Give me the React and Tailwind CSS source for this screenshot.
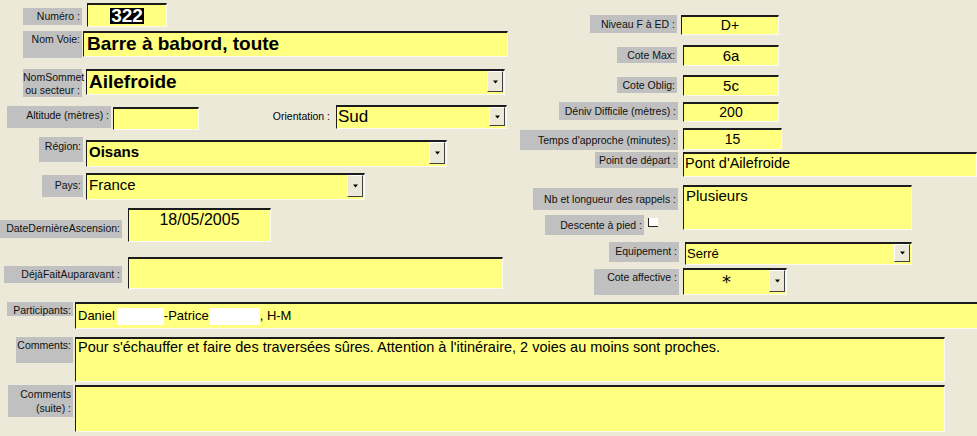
import React from 'react';

const Label = ({ children, className = '' }) => (
  <div className={`bg-[#c0c0c0] text-right text-[10.5px] leading-[13px] text-[#111] pr-[2px] pt-[2px] shrink-0 whitespace-nowrap ${className}`}>
    {children}
  </div>
);

const Field = ({ children, className = '' }) => (
  <div className={`bg-[#ffff80] border border-t-2 border-t-[#1c1c1c] border-l-[#1c1c1c] border-r-[#fbfbf4] border-b-[#fbfbf4] shrink-0 overflow-hidden whitespace-nowrap ${className}`}>
    {children}
  </div>
);

const Arrow = () => (
  <div className="w-[16px] self-stretch mb-[2px] mr-[1px] bg-[#ece9d8] border border-t-white border-l-white border-r-[#404040] border-b-[#404040] flex items-center justify-center shrink-0">
    <svg width="7" height="4" viewBox="0 0 7 4">
      <path d="M1 0.5h5L3.5 3.5z" fill="#000" />
    </svg>
  </div>
);

const Combo = ({ children, className = '', textClass = '' }) => (
  <Field className={`flex ${className}`}>
    <div className={`flex-1 overflow-hidden ${textClass}`}>{children}</div>
    <Arrow />
  </Field>
);

export default function App() {
  return (
    <div className="w-[977px] h-[436px] overflow-hidden bg-[#ece9d8] font-['Liberation_Sans',Arial,sans-serif] text-black">
      <div className="flex h-[302px]">
        {/* colonne gauche */}
        <div className="w-[520px] shrink-0 flex flex-col">
          <div className="flex items-start mt-[3px]">
            <Label className="ml-[23px] w-[59px] h-[17px] mt-[5px]">Numéro :</Label>
            <Field className="ml-[5px] w-[80px] h-[24px] flex items-center justify-center">
              <span className="bg-black text-white font-bold text-[19px] leading-[16px] px-[1px]">322</span>
            </Field>
          </div>

          <div className="flex items-start mt-[4px]">
            <Label className="ml-[23px] w-[59px] h-[27px]">Nom Voie:</Label>
            <Field className="ml-[1px] w-[425px] h-[26px] pl-[3px] font-bold text-[19px] leading-[22px]">
              Barre à babord, toute
            </Field>
          </div>

          <div className="flex items-start mt-[11px]">
            <Label className="ml-[23px] w-[59px] h-[28px] pt-[1px]">
              NomSommet
              <br />
              ou secteur :
            </Label>
            <Combo className="ml-[4px] w-[419px] h-[26px]" textClass="pl-[2px] font-bold text-[19px] leading-[22px]">
              Ailefroide
            </Combo>
          </div>

          <div className="flex items-start mt-[8px]">
            <Label className="ml-[7px] w-[104px] h-[22px] mt-[1px] pt-[3px]">Altitude (mètres) :</Label>
            <Field className="ml-[2px] w-[86px] h-[23px] mt-[2px]" />
            <div className="w-[137px] h-[24px] flex items-center justify-end pr-[6px] text-[10.5px]">Orientation :</div>
            <Combo className="w-[171px] h-[24px]" textClass="pl-[1px] text-[17px] leading-[20px]">
              Sud
            </Combo>
          </div>

          <div className="flex items-start mt-[7px]">
            <Label className="ml-[39px] w-[44px] h-[25px] pt-[3px]">Région:</Label>
            <Combo className="ml-[3px] mt-[3px] w-[361px] h-[27px]" textClass="pl-[2px] font-bold text-[15px] leading-[19px]">
              Oisans
            </Combo>
          </div>

          <div className="flex items-start mt-[6px]">
            <Label className="ml-[42px] w-[41px] h-[22px] mt-[2px] pt-[4px]">Pays:</Label>
            <Combo className="ml-[3px] w-[279px] h-[27px]" textClass="pl-[2px] text-[15px] leading-[19px]">
              France
            </Combo>
          </div>

          <div className="flex items-start mt-[8px]">
            <Label className="w-[122px] h-[18px] mt-[12px]">DateDernièreAscension:</Label>
            <Field className="ml-[6px] w-[143px] h-[34px] text-center text-[16px] leading-[19px]">18/05/2005</Field>
          </div>

          <div className="flex items-start mt-[15px]">
            <Label className="ml-[4px] w-[118px] h-[17px] mt-[9px] pt-[1px]">DéjàFaitAuparavant :</Label>
            <Field className="ml-[6px] w-[375px] h-[32px]" />
          </div>
        </div>

        {/* colonne droite */}
        <div className="flex-1 flex flex-col">
          <div className="flex items-start mt-[15px]">
            <div className="w-[161px] flex justify-end pr-[4px]">
              <Label className="w-[87px] h-[18px] pt-[3px]">Niveau F à ED :</Label>
            </div>
            <Field className="w-[98px] h-[20px] text-center text-[14px] leading-[17px]">D+</Field>
          </div>

          <div className="flex items-start mt-[10px]">
            <div className="w-[163px] flex justify-end pr-[6px] pt-[2px]">
              <Label className="w-[60px] h-[16px] pt-[1px]">Cote Max:</Label>
            </div>
            <Field className="w-[96px] h-[21px] text-center text-[15px] leading-[18px]">6a</Field>
          </div>

          <div className="flex items-start mt-[9px]">
            <div className="w-[163px] flex justify-end pr-[6px] pt-[2px]">
              <Label className="w-[60px] h-[16px] pt-[1px]">Cote Oblig:</Label>
            </div>
            <Field className="w-[96px] h-[21px] text-center text-[15px] leading-[18px]">5c</Field>
          </div>

          <div className="flex items-start mt-[6px]">
            <div className="w-[163px] flex justify-end pr-[5px]">
              <Label className="w-[119px] h-[18px] pt-[3px]">Déniv Difficile (mètres) :</Label>
            </div>
            <Field className="w-[96px] h-[20px] text-center text-[14px] leading-[17px]">200</Field>
          </div>

          <div className="flex items-start mt-[6px]">
            <div className="w-[163px] flex justify-end pr-[5px] pt-[2px]">
              <Label className="w-[158px] h-[20px] pt-[4px]">Temps d'approche (minutes) :</Label>
            </div>
            <Field className="w-[99px] h-[22px] text-center text-[14px] leading-[18px]">15</Field>
          </div>

          <div className="flex items-start mt-[2px]">
            <div className="w-[163px] flex justify-end pr-[5px]">
              <Label className="w-[83px] h-[16px] pt-[1px]">Point de départ :</Label>
            </div>
            <Field className="w-[294px] h-[25px] pl-[1px] text-[14.5px] leading-[19px]">Pont d'Ailefroide</Field>
          </div>

          <div className="flex items-start mt-[8px]">
            <div className="w-[163px] flex flex-col items-end">
              <Label className="w-[145px] h-[22px] mt-[3px] mr-[5px] pt-[5px]">Nb et longueur des rappels :</Label>
              <div className="flex items-start mt-[5px] mr-[25px]">
                <Label className="w-[99px] h-[20px] pt-[4px]">Descente à pied :</Label>
                <div className="ml-[4px] mt-[3px] w-[10px] h-[9px] bg-white border-l border-b border-[#222]" />
              </div>
            </div>
            <Field className="w-[229px] h-[45px] pl-[2px] text-[15px] leading-[18px]">Plusieurs</Field>
          </div>

          <div className="flex items-start mt-[7px]">
            <div className="w-[165px] flex justify-end pr-[6px]">
              <Label className="w-[70px] h-[20px] pt-[3px]">Equipement :</Label>
            </div>
            <Combo className="w-[227px] h-[23px]" textClass="pl-[1px] text-[13px] leading-[19px]">
              Serré
            </Combo>
          </div>

          <div className="flex items-start mt-[3px]">
            <div className="w-[163px] flex justify-end pr-[4px] pt-[1px]">
              <Label className="w-[85px] h-[26px] pt-[2px]">Cote affective :</Label>
            </div>
            <Combo className="w-[104px] h-[27px]" textClass="text-center font-['DejaVu_Sans',sans-serif] text-[18px] leading-[24px]">
              *
            </Combo>
          </div>
        </div>
      </div>

      {/* bas du formulaire */}
      <div className="flex items-start">
        <Label className="ml-[7px] w-[66px] h-[14px] pt-0 pr-[1px]">Participants:</Label>
        <Field className="ml-[2px] w-[910px] h-[27px] pl-[2px] flex items-center text-[13px] border-r-0">
          <span>Daniel</span>
          <span className="inline-block w-[47px] h-[17px] bg-white ml-[2px]" />
          <span>-Patrice</span>
          <span className="inline-block w-[50px] h-[17px] bg-white ml-[1px]" />
          <span>, H-M</span>
        </Field>
      </div>

      <div className="flex items-start mt-[8px]">
        <Label className="ml-[16px] w-[57px] h-[26px] pr-[1px]">Comments:</Label>
        <Field className="ml-[2px] w-[870px] h-[45px] pl-[2px] text-[14.5px] leading-[17px]">
          Pour s'échauffer et faire des traversées sûres. Attention à l'itinéraire, 2 voies au moins sont proches.
        </Field>
      </div>

      <div className="flex items-start mt-[3px]">
        <Label className="ml-[8px] w-[65px] h-[32px] pt-[1px] pr-[1px] leading-[14px]">
          Comments
          <br />
          (suite) :
        </Label>
        <Field className="ml-[2px] w-[870px] h-[47px]" />
      </div>
    </div>
  );
}
